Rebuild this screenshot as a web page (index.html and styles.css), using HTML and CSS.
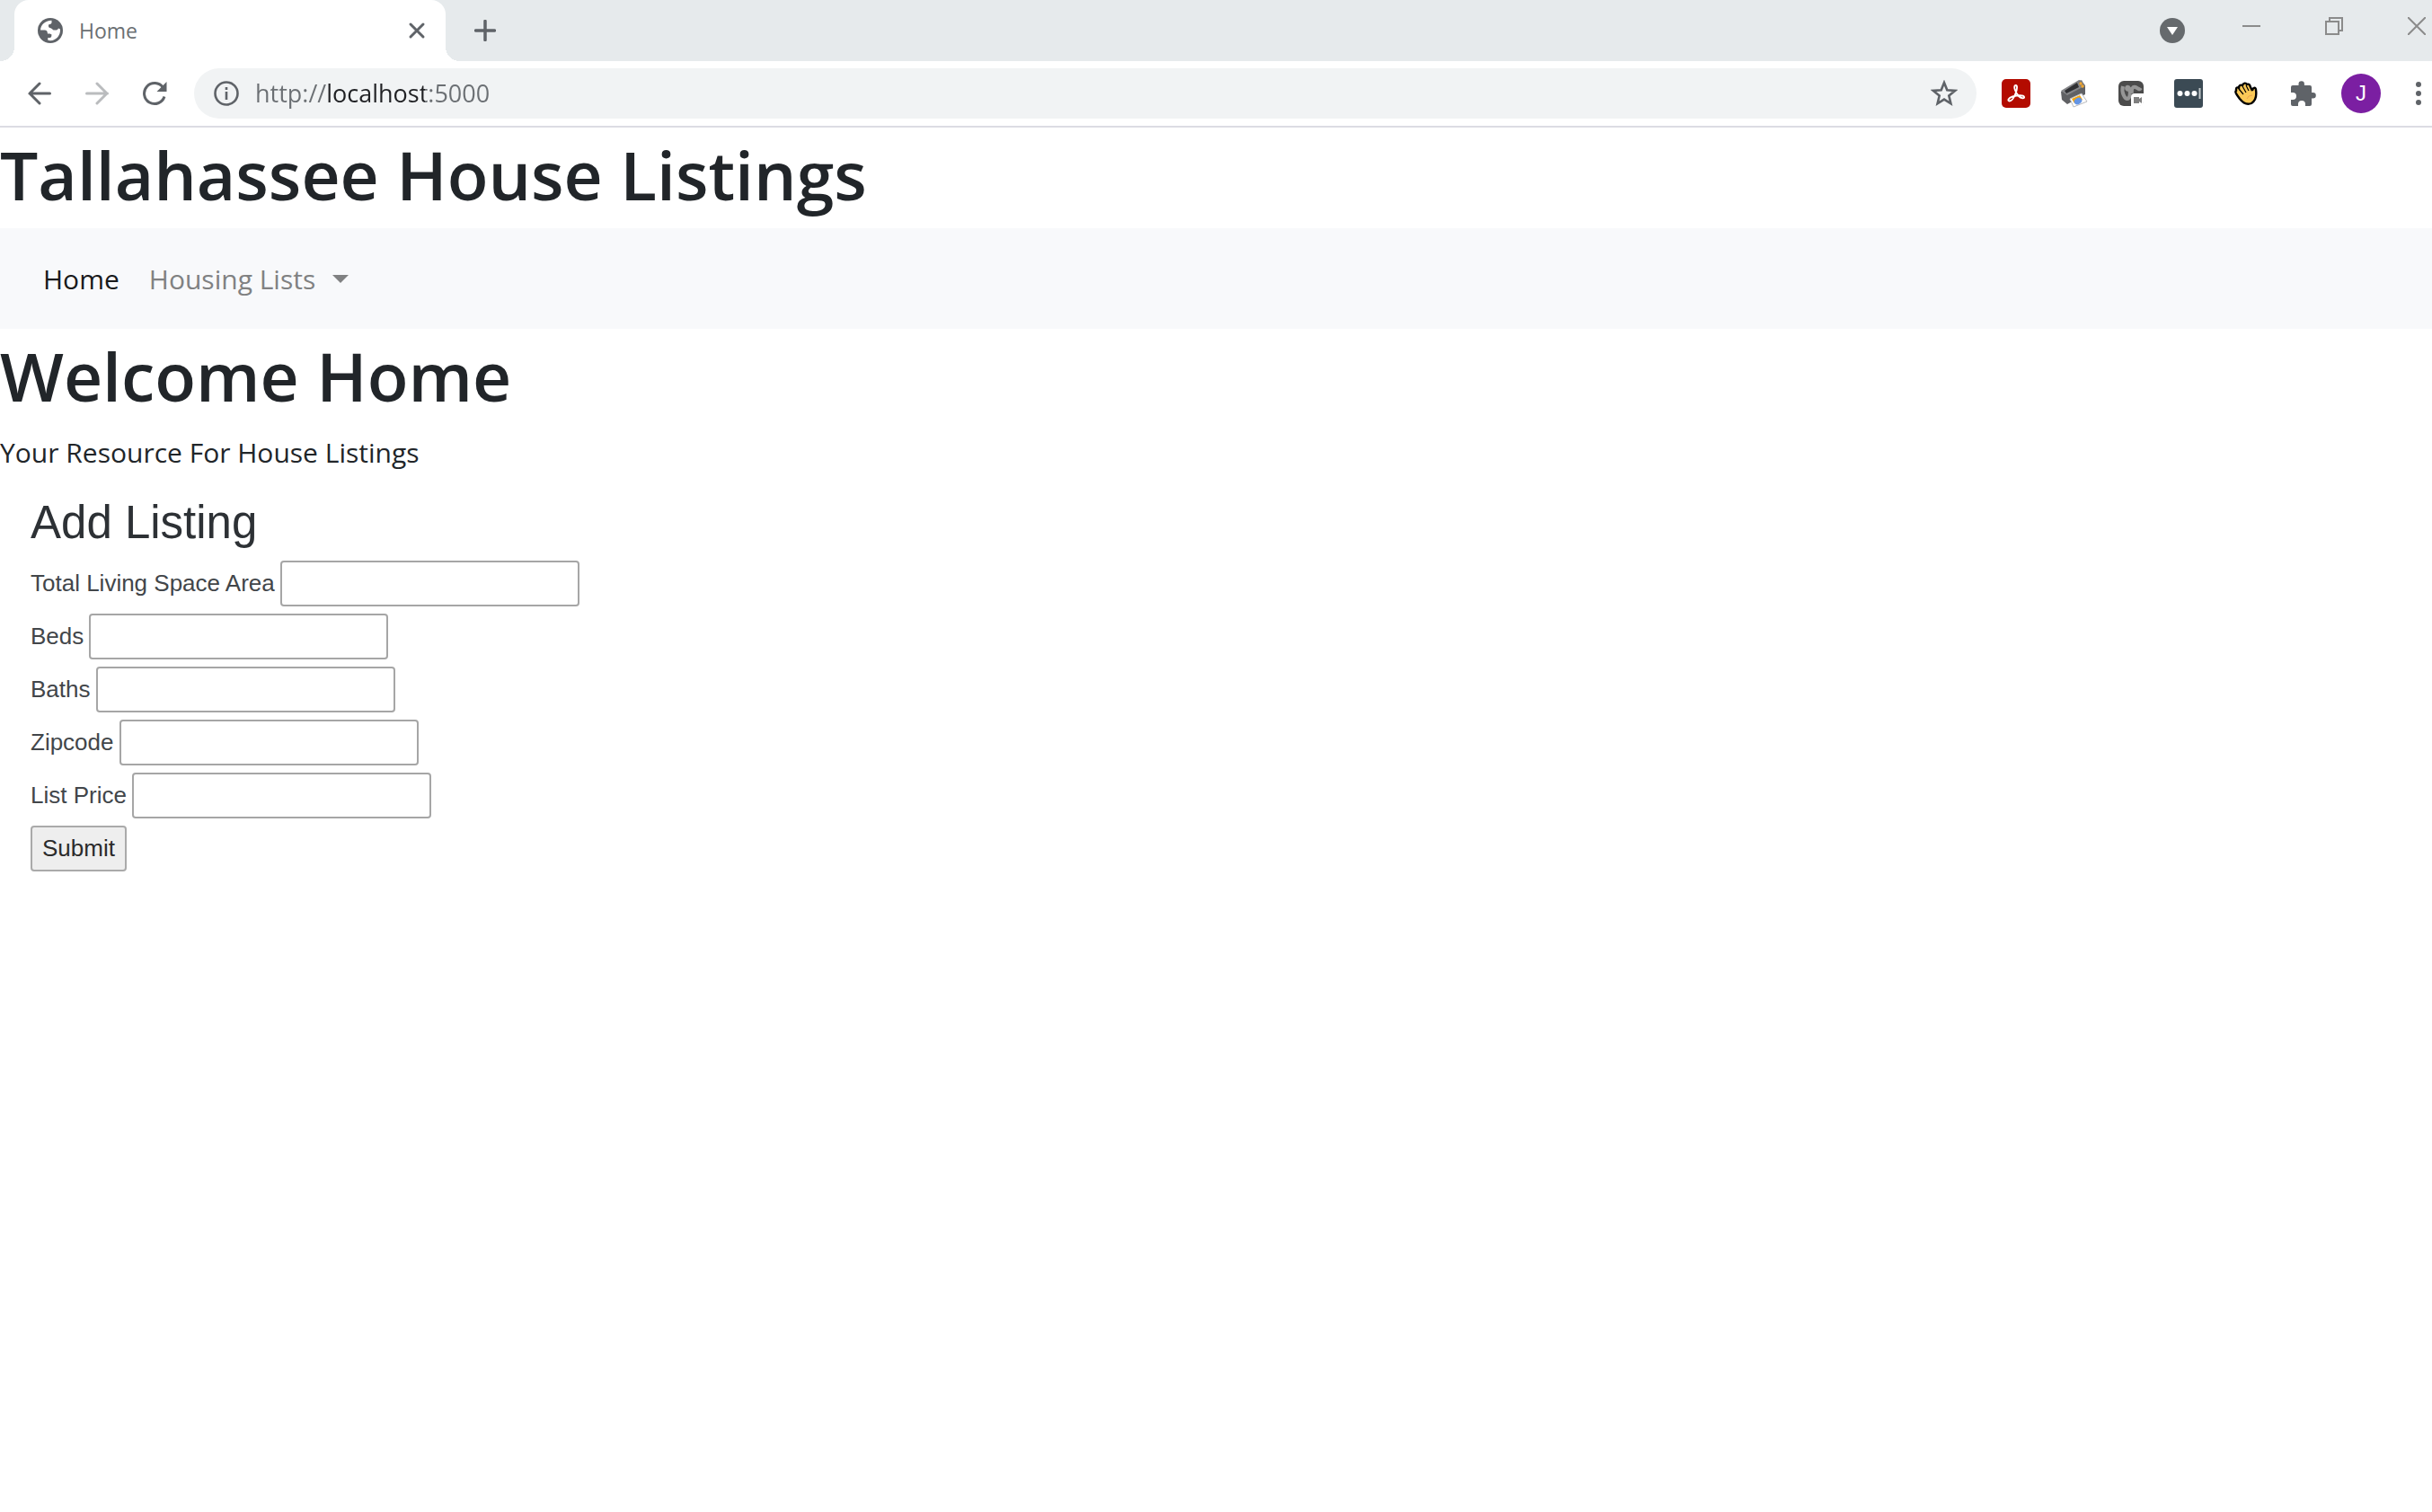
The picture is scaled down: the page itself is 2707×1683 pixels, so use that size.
FILE: index.html
```html
<!DOCTYPE html>
<html lang="en">
<head>
<meta charset="utf-8">
<title>Home</title>
<link rel="stylesheet" href="styles.css">
</head>
<body>
<header class="browser">
  <div class="tab-strip">
    <div class="tab">
      <svg class="icon-28" viewBox="0 0 28 28"><circle cx="14" cy="14" r="14" fill="#5f6368"/><path fill="#fff" d="M3 13.500C3.500 7.500 8 3 15.500 2.800V5.500Q15 7 12 7.500V9.500Q12 11 15 11.500L17.500 13.500H21Q22.500 13 23 11.500L25 12.500C25.500 19 21 25 14 25.300L11.300 24.800V22H14Q15.500 21.500 15.500 18.500L13.500 17.500H11L10.500 15Q10 13.500 8 13.500z"/></svg>
      <span class="tab-title">Home</span>
      <button class="plain" aria-label="Close tab"><svg class="icon-20" viewBox="0 0 20 20"><path d="M3 3l14 14M17 3L3 17" stroke="#5f6368" stroke-width="3" stroke-linecap="round"/></svg></button>
    </div>
    <button class="plain new-tab" aria-label="New tab"><svg class="icon-24" viewBox="0 0 24 24"><path d="M12 1.500v21M1.500 12h21" stroke="#5f6368" stroke-width="3.500" stroke-linecap="round"/></svg></button>
    <button class="plain tab-search" aria-label="Search tabs"><svg class="icon-28" viewBox="0 0 28 28"><circle cx="14" cy="14" r="14" fill="#666a6d"/><path d="M8 10h12l-6 9z" fill="#fff"/></svg></button>
    <div class="window-controls">
      <button class="plain" aria-label="Minimize"><svg class="icon-20" viewBox="0 0 20 20"><path d="M0 10h20" stroke="#8b8b8b" stroke-width="2"/></svg></button>
      <button class="plain" aria-label="Restore"><svg class="icon-20" viewBox="0 0 20 20"><path d="M1 5h14v14H1zM5 5V1h14v14h-4" fill="none" stroke="#8b8b8b" stroke-width="2"/></svg></button>
      <button class="plain" aria-label="Close window"><svg class="icon-20" viewBox="0 0 20 20"><path d="M0 0l20 20M20 0L0 20" stroke="#8b8b8b" stroke-width="2"/></svg></button>
    </div>
  </div>
  <div class="toolbar">
    <button class="plain tool" aria-label="Back"><svg class="icon-26" viewBox="0 0 26 26"><path d="M24.500 13H2M13 2L2 13l11 11" fill="none" stroke="#5f6368" stroke-width="3" stroke-linecap="round"/></svg></button>
    <button class="plain tool" aria-label="Forward"><svg class="icon-26" viewBox="0 0 26 26"><path d="M1.500 13h23M13 2l11 11-11 11" fill="none" stroke="#babcbe" stroke-width="3" stroke-linecap="round"/></svg></button>
    <button class="plain tool" aria-label="Reload"><svg class="icon-28" viewBox="0 0 28 28"><path d="M23.500 7.500A11.500 11.500 0 1 0 25 17.500" fill="none" stroke="#5f6368" stroke-width="3"/><path d="M27.500 1v11h-11z" fill="#5f6368"/></svg></button>
    <div class="address">
      <svg class="icon-28" viewBox="0 0 28 28"><circle cx="14" cy="14" r="12.500" fill="none" stroke="#5f6368" stroke-width="2.600"/><path d="M12.700 7h2.600v3h-2.600zM12.700 12h2.600v9h-2.600z" fill="#5f6368"/></svg>
      <input class="url" type="text" aria-label="Address" value="http://localhost:5000">
      <button class="plain" aria-label="Bookmark this page"><svg class="icon-30" viewBox="0 0 30 30"><path d="M15 3l3.300 8.200 8.800.7-6.800 5.700 2.100 8.700-7.400-4.700-7.400 4.700 2.100-8.700L2.900 11.900l8.800-.7z" fill="none" stroke="#5f6368" stroke-width="2.600"/></svg></button>
    </div>
    <button class="plain tool" aria-label="PDF tools"><svg class="icon-32" viewBox="0 0 32 32"><rect width="32" height="32" rx="5" fill="#b30b00"/><path d="M15.500 7c2.500-.5 1.500 5 .2 8.500-1.500 4-4.500 9-7 9s-1.500-3.500 3.500-5c5-1.500 12-2 12.800.3s-3.500 2-6-.8c-3.500-3.500-6.500-11-3.500-12z" fill="none" stroke="#fff" stroke-width="1.900"/></svg></button>
    <button class="plain tool" aria-label="Print"><svg class="icon-32" viewBox="0 0 32 32"><path d="M2 14L23 1l6 6v10L9 28l-6-5z" fill="#606164"/><path d="M2 13L22 1l4 8L9 18z" fill="#858689"/><path d="M6 13l14-9 2 5-14 7z" fill="#303134"/><path d="M21 3l4-2 4 7-4 2z" fill="#77797c"/><circle cx="24" cy="5" r="1.700" fill="#f3a72e"/><circle cx="26" cy="8" r="1.700" fill="#f3a72e"/><path d="M12 22l13-6 6 9-15 6z" fill="#fff" stroke="#b9babd"/><path d="M14 22l9-4 3 5-9 4z" fill="#f5a50a"/><ellipse cx="21" cy="24.500" rx="4.500" ry="3.500" fill="#6495e5" transform="rotate(-30 21 24.500)"/></svg></button>
    <button class="plain tool" aria-label="Screen recorder"><svg class="icon-28" viewBox="0 0 28 28"><rect width="28" height="28" rx="6" fill="#4b4b4b"/><path d="M5 6c-2 7 2 14 5 14s4-10 1-13c-2-1-3 2 0 3M15 14c-1-5 1-8 4-7s4 4 6 1" fill="none" stroke="#969696" stroke-width="4"/><path d="M14 18q0-4 4-4h10v9q0 5-5 5h-9z" fill="#fff"/><path d="M17 18h6v2l3-2v7l-3-2v2h-6z" fill="#808080"/></svg></button>
    <button class="plain tool" aria-label="Password manager"><svg class="icon-32" viewBox="0 0 32 32"><rect width="32" height="32" rx="3" fill="#3b4a54"/><circle cx="6.500" cy="16" r="3" fill="#fff"/><circle cx="14.500" cy="16" r="3" fill="#fff"/><circle cx="22.500" cy="16" r="3" fill="#fff"/><path d="M28.500 10v12" stroke="#c3c8cb" stroke-width="2"/></svg></button>
    <button class="plain tool" aria-label="Wave"><svg class="icon-26" viewBox="0 0 26 26"><path d="M2 8c0-2 2-2 3-1 0-3 2-4 4-3 1-3 4-3 5-1 2-1 3 0 4 3l2 4c0-3 4-5 4-1 1 7 0 12-5 15-5 2-9 0-13-5-3-4-6-8-4-9z" fill="#fac957" stroke="#000" stroke-width="2.400"/><path d="M5 8l5 6M9 5l4 7M13 4l3 6" stroke="#000" stroke-width="1.200"/><path d="M14 19q1-4 6-4" fill="none" stroke="#eba352"/></svg></button>
    <button class="plain tool" aria-label="Extensions"><svg class="icon-28" viewBox="0 0 28 28"><path d="M2 5h6.500V3.500a3.200 3.200 0 0 1 6.400 0V5H21q2 0 2 2v6h1.500a3.300 3.300 0 0 1 0 6.600H23V26q0 2-2 2h-5v-2a4 4 0 0 0-8 0v2H2q-2 0-2-2v-5h2a4 4 0 0 0 0-8H0V7q0-2 2-2z" fill="#5f6368"/></svg></button>
    <button class="plain tool avatar" aria-label="Profile J">J</button>
    <button class="plain menu" aria-label="Menu"><svg class="icon-30" viewBox="0 0 30 30"><g fill="#5f6368"><circle cx="15" cy="5" r="3"/><circle cx="15" cy="15" r="3"/><circle cx="15" cy="25" r="3"/></g></svg></button>
  </div>
</header>
<main>
  <h1>Tallahassee House Listings</h1>
  <nav class="navbar">
    <a class="nav-link active" href="#">Home</a>
    <a class="nav-link dropdown" href="#">Housing Lists</a>
  </nav>
  <h1>Welcome Home</h1>
  <p class="lead">Your Resource For House Listings</p>
  <form class="listing-form">
    <h2>Add Listing</h2>
    <div class="field"><label for="area">Total Living Space Area</label><input id="area" type="text"></div>
    <div class="field"><label for="beds">Beds</label><input id="beds" type="text"></div>
    <div class="field"><label for="baths">Baths</label><input id="baths" type="text"></div>
    <div class="field"><label for="zip">Zipcode</label><input id="zip" type="text"></div>
    <div class="field"><label for="price">List Price</label><input id="price" type="text"></div>
    <button class="submit" type="button">Submit</button>
  </form>
</main>
</body>
</html>
```
FILE: styles.css
```css
* { box-sizing: border-box; }
body {
  margin: 0;
  background: #fff;
  color: #212529;
  font-family: "Open Sans", "Noto Sans", sans-serif;
  font-size: 30px;
}
svg { display: block; flex: none; }
.icon-20 { width: 20px; height: 20px; }
.icon-24 { width: 24px; height: 24px; }
.icon-26 { width: 26px; height: 26px; }
.icon-28 { width: 28px; height: 28px; }
.icon-30 { width: 30px; height: 30px; }
.icon-32 { width: 32px; height: 32px; }
.plain {
  display: flex;
  align-items: center;
  justify-content: center;
  padding: 0;
  border: 0;
  background: none;
}

/* Browser frame */
.tab-strip {
  display: flex;
  align-items: center;
  height: 68px;
  padding: 0 7px 0 16px;
  background: #e6eaec;
}
.tab {
  position: relative;
  display: flex;
  align-items: center;
  width: 480px;
  height: 68px;
  padding: 0 22px 0 26px;
  border-radius: 16px 16px 0 0;
  background: #fff;
}
.tab::before,
.tab::after {
  content: "";
  position: absolute;
  bottom: 0;
  width: 16px;
  height: 16px;
}
.tab::before { right: 100%; background: radial-gradient(circle at 0 0, transparent 16px, #fff 16px); }
.tab::after { left: 100%; background: radial-gradient(circle at 100% 0, transparent 16px, #fff 16px); }
.tab-title {
  flex: 1;
  padding-left: 18px;
  color: #6b6f73;
  font-size: 23px;
  line-height: 32px;
}
.new-tab { margin-left: 32px; }
.tab-search { margin-left: auto; }
.window-controls {
  display: flex;
  gap: 72px;
  margin-left: 64px;
  padding-bottom: 10px;
}
.toolbar {
  display: flex;
  align-items: center;
  gap: 20px;
  height: 74px;
  padding-left: 22px;
  border-bottom: 2px solid #dcdce3;
}
.tool { flex: none; width: 44px; height: 44px; }
.address {
  display: flex;
  flex: 1;
  align-items: center;
  height: 56px;
  margin: 0 2px;
  padding: 0 21px 0 22px;
  border-radius: 28px;
  background: #f1f3f4;
}
.url {
  flex: 1;
  min-width: 0;
  margin-left: 18px;
  padding: 0 0 2px;
  border: 0;
  outline: 0;
  background: linear-gradient(90deg, #6b6f73 80px, #202124 80px 189px, #6b6f73 189px);
  background-clip: text;
  color: transparent;
  font: inherit;
  font-size: 27px;
}
.avatar {
  border-radius: 50%;
  background: #7b1fa2;
  color: #fff;
  font-size: 24px;
}
.menu { width: 30px; margin-left: 7px; }

/* Page */
h1 {
  margin: 0;
  padding-top: 4px;
  font-size: 75px;
  font-weight: 600;
  line-height: 96px;
}
.navbar {
  display: flex;
  align-items: center;
  gap: 33px;
  height: 112px;
  margin-top: 12px;
  padding: 0 48px;
  background: #f8f9fb;
}
.nav-link { color: #808182; text-decoration: none; }
.nav-link.active { color: #191a1b; }
.dropdown { display: flex; align-items: center; }
.dropdown::after {
  content: "";
  margin-left: 19px;
  border: 9px solid transparent;
  border-top-color: currentColor;
  border-bottom: 0;
}
.lead { margin: 14px 0 24px; line-height: 48px; }
.listing-form {
  display: flex;
  flex-direction: column;
  align-items: flex-start;
  gap: 8px;
  padding-left: 34px;
  color: #42464a;
  font-family: "Liberation Sans", Arial, sans-serif;
  font-size: 26px;
}
h2 {
  margin: 0;
  padding-bottom: 4px;
  color: #2d3135;
  font-size: 51px;
  font-weight: 400;
  line-height: 60px;
}
.field { display: flex; align-items: center; gap: 6px; }
.field input {
  width: 333px;
  height: 51px;
  border: 2px solid #a6a6a6;
  border-radius: 4px;
  background: #fff;
  font: inherit;
}
.submit {
  height: 51px;
  padding: 0 11px;
  border: 2px solid #aaa;
  border-radius: 4px;
  background: #eee;
  color: #2b2b2b;
  font: inherit;
}
```
